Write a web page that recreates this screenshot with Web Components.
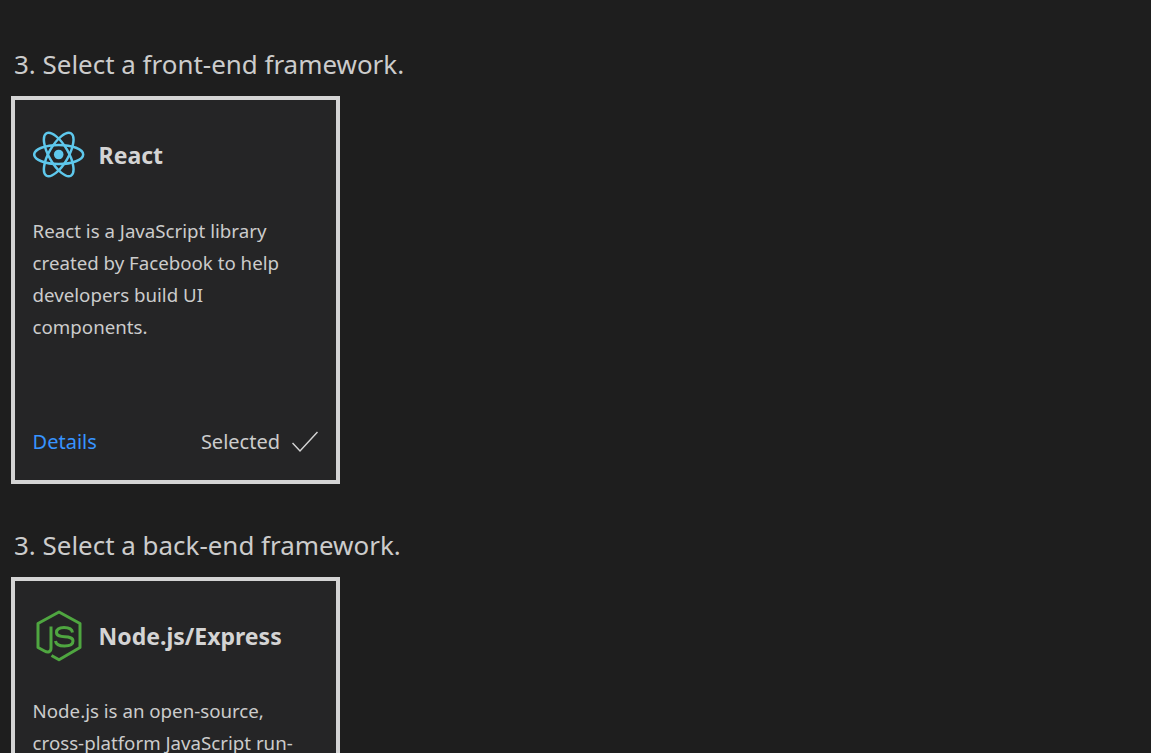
<!DOCTYPE html>
<html><head><meta charset="utf-8"><style>
html,body{margin:0;background:#1e1e1e;height:753px;overflow:hidden}
body{font-family:"Noto Sans",sans-serif;color:#ccc;padding:0 14px}
</style></head><body>
<template id="fc"><style>
:host{display:block;width:329px;box-sizing:border-box;border:4px solid #d4d4d4;background:#252526;margin-left:-3px;height:388px;padding:31.1px 18px 0 17.6px}
.h{display:flex;align-items:center;gap:14px;height:47px;margin-bottom:36.3px}
.ic{width:52px;height:52px;flex:none;display:flex;align-items:center;justify-content:center}
.t{font-size:23px;font-weight:700;color:#d4d4d4}
.d{font-size:18.7px;line-height:32px;color:#ccc;height:213.4px}
.f{display:flex;justify-content:space-between;align-items:center;font-size:20px}
a{color:#3794ff;text-decoration:none}
.s{display:flex;align-items:center;gap:12px;color:#ccc}
</style>
<div class="h"><div class="ic"><slot name="icon"></slot></div><div class="t"><slot name="title"></slot></div></div>
<div class="d"><slot name="desc"></slot></div>
<div class="f"><a href="#">Details</a><div class="s">Selected
<svg width="26" height="22" viewBox="0 0 26 22" fill="none" stroke="#d4d4d4" stroke-width="1.5"><path d="M0.5 12 L8 20 L25.5 1"/></svg></div></div>
</template>
<template id="st"><style>:host{display:block;font-size:25.95px;line-height:34px;color:#ccc;margin-bottom:15px}</style><slot></slot></template>
<script>
class StepTitle extends HTMLElement{constructor(){super();this.attachShadow({mode:"open"}).appendChild(document.getElementById("st").content.cloneNode(true))}}
class FwCard extends HTMLElement{constructor(){super();this.attachShadow({mode:"open"}).appendChild(document.getElementById("fc").content.cloneNode(true))}}
customElements.define("step-title",StepTitle);customElements.define("fw-card",FwCard);
</script>
<div style="height:47.4px"></div>
<step-title>3. Select a front-end framework.</step-title>
<fw-card>
<svg slot="icon" width="52" height="47" viewBox="0 0 52 47" fill="none" stroke="#5ec8ec" stroke-width="2.5"><circle cx="25.7" cy="23.5" r="4.8" fill="#5ec8ec" stroke="none"/><ellipse cx="25.7" cy="23.5" rx="24.5" ry="9.6"/><ellipse cx="25.7" cy="23.5" rx="24.5" ry="9.6" transform="rotate(60 25.7 23.5)"/><ellipse cx="25.7" cy="23.5" rx="24.5" ry="9.6" transform="rotate(120 25.7 23.5)"/></svg>
<span slot="title">React</span>
<span slot="desc">React is a JavaScript library<br>created by Facebook to help<br>developers build UI<br>components.</span>
</fw-card>
<div style="height:43.6px"></div>
<step-title>3. Select a back-end framework.</step-title>
<fw-card>
<svg slot="icon" width="52" height="52" viewBox="0 0 52 52" fill="none" stroke="#4fa640" stroke-width="3" stroke-linejoin="round"><path d="M18.5 45.5 L26 49.8 L47 37.5 V13.5 L26 2 L5 13.5 V37.5 L11.5 41 C15 43 18 42 18 38 V16.5"/><path d="M39.5 22.5 C39 19 35.5 17.5 31 17.5 C26 17.5 23.5 19.5 23.5 22.5 C23.5 30 40 23.5 40 31 C40 34.5 36.5 36 31.5 36 C26.5 36 23 34.5 22.5 31"/></svg>
<span slot="title">Node.js/Express</span>
<span slot="desc">Node.js is an open-source,<br>cross-platform JavaScript run-<br>time environment.</span>
</fw-card>
</body></html>
